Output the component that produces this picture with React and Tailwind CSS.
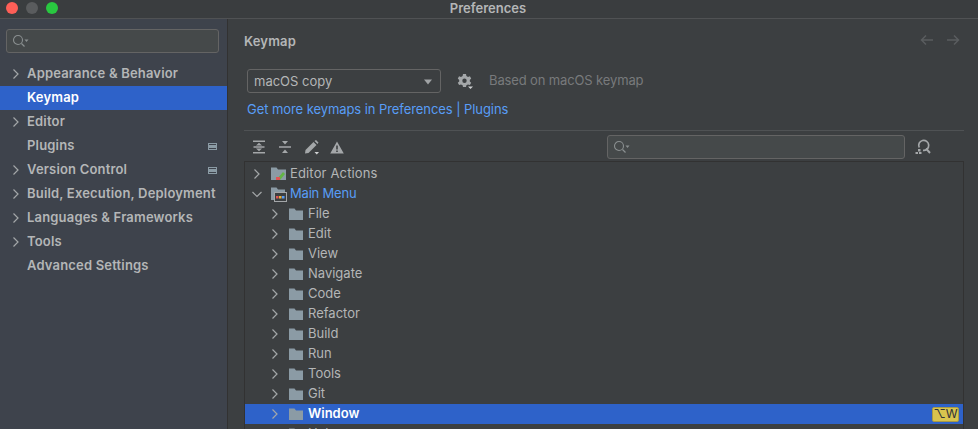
import React from 'react';

const font = { fontFamily: 'Inter, "Liberation Sans", sans-serif' };

const sideItems = [
    { label: 'Appearance & Behavior', arrow: true },
    { label: 'Keymap', selected: true },
    { label: 'Editor', arrow: true },
    { label: 'Plugins', badge: true },
    { label: 'Version Control', arrow: true, badge: true },
    { label: 'Build, Execution, Deployment', arrow: true },
    { label: 'Languages & Frameworks', arrow: true },
    { label: 'Tools', arrow: true },
    { label: 'Advanced Settings' },
];

const menuItems = ['File', 'Edit', 'View', 'Navigate', 'Code', 'Refactor', 'Build', 'Run', 'Tools', 'Git'];

const Chevron = ({ open, className = '' }) => (
    <svg width="12" height="12" viewBox="0 0 12 12" fill="none" stroke="#a4a7a9" strokeWidth="1.2" className={className}>
        {open ? <path d="M1.5 4 L6 8.5 L10.5 4" /> : <path d="M3.5 1.5 L8 6 L3.5 10.5" />}
    </svg>
);

const Folder = () => (
    <svg width="14" height="12" viewBox="0 0 14 12" className="shrink-0">
        <path d="M0 0.5 H5.5 L7 2.5 H14 V12 H0 Z" fill="#8b9ba5" />
    </svg>
);

const SearchIcon = () => (
    <svg width="18" height="14" viewBox="0 0 18 14" fill="none" className="shrink-0">
        <circle cx="6" cy="6" r="4.5" stroke="#8a8f90" strokeWidth="1.1" />
        <path d="M9.5 9.5 L12.5 12.5" stroke="#8a8f90" strokeWidth="1.3" />
        <path d="M12.5 5.5 H16.5 L14.5 8 Z" fill="#8a8f90" />
    </svg>
);

const SearchBox = ({ className }) => (
    <div className={`h-6 flex items-center pl-[5px] rounded-[3px] border border-[#646464] bg-[#45494a] ${className}`}>
        <SearchIcon />
    </div>
);

const SideRow = ({ item }) => (
    <div className={`h-6 flex items-center text-[13px] font-semibold tracking-[0.18px] ${item.selected ? 'bg-[#2e62c9] text-white' : 'text-[#b4b6b7]'}`}>
        <div className="w-[27px] shrink-0 pl-[10px]">{item.arrow && <Chevron />}</div>
        <span className="flex-1 whitespace-nowrap">{item.label}</span>
        {item.badge && (
            <svg width="9" height="7" viewBox="0 0 9 7" className="mr-[10px] shrink-0">
                <rect x="0.5" y="0.5" width="8" height="6" fill="none" stroke="#8b9ba5" />
                <rect x="1" y="2" width="7" height="3" fill="#8b9ba5" />
            </svg>
        )}
    </div>
);

const TreeRow = ({ label, selected }) => (
    <div className={`h-5 flex items-center pl-6 text-[13px] ${selected ? 'bg-[#2e62c9] text-white font-semibold' : 'text-[#b4b6b7]'}`}>
        <Chevron className="mr-[8px]" />
        <Folder />
        <span className="ml-[5px] flex-1">{label}</span>
        {selected && (
            <span className="mr-[4px] h-[15px] w-[27px] flex items-center justify-center rounded-[2px] border border-[#a89a45] bg-[#d8c44e] text-[#2f3238] text-[12px] font-normal leading-none">⌥W</span>
        )}
    </div>
);

export default function App() {
    return (
        <div className="w-[978px] h-[429px] overflow-hidden flex flex-col bg-[#3c3f41]" style={font}>
            {/* Title bar */}
            <div className="relative h-[19px] shrink-0 flex items-start justify-center bg-[#3a3d3f] border-b border-[#505254]">
                <div className="absolute left-[6px] top-[2px] flex gap-2">
                    <div className="w-3 h-3 rounded-full bg-[#fe5f57]" />
                    <div className="w-3 h-3 rounded-full bg-[#5a5c5e]" />
                    <div className="w-3 h-3 rounded-full bg-[#29c740]" />
                </div>
                <span className="text-[13px] font-semibold text-[#b4b6b7] leading-[16px] -ml-[2px]">Preferences</span>
            </div>

            <div className="flex flex-1 min-h-0">
                {/* Sidebar */}
                <div className="w-[228px] shrink-0 bg-[#3e434c] border-r border-[#323232]">
                    <SearchBox className="ml-[6px] mr-[8px] mt-[10px] mb-[9px]" />
                    {sideItems.map((item) => (
                        <SideRow key={item.label} item={item} />
                    ))}
                </div>

                {/* Main panel */}
                <div className="flex-1 min-w-0 pl-4 pr-[14px]">
                    <div className="h-[50px] flex items-start justify-between pt-[14px]">
                        <span className="text-[13px] font-semibold text-[#b4b6b7] leading-4 tracking-[0.15px]">Keymap</span>
                        <div className="flex gap-3 pr-[4px] pt-[1px]">
                            <svg width="14" height="12" viewBox="0 0 14 12" fill="none" stroke="#5a5d5f" strokeWidth="1.5"><path d="M13 6 H2 M6 1.5 L1.5 6 L6 10.5" /></svg>
                            <svg width="14" height="12" viewBox="0 0 14 12" fill="none" stroke="#5a5d5f" strokeWidth="1.5"><path d="M1 6 H12 M8 1.5 L12.5 6 L8 10.5" /></svg>
                        </div>
                    </div>

                    <div className="pl-[3px] flex items-center h-6">
                        <div className="w-[194px] h-6 px-[6px] pt-px flex items-center justify-between rounded-[3px] border border-[#646464] bg-[#3c3f41] text-[13px] text-[#b4b6b7]">
                            <span>macOS copy</span>
                            <svg width="10" height="6" viewBox="0 0 10 6" className="mr-[1px]"><path d="M1 0.5 H9 L5 5.5 Z" fill="#a0a3a5" /></svg>
                        </div>
                        <svg width="16" height="16" viewBox="0 0 16 16" className="ml-4" fill="#a4a7a9">
                            <path fillRule="evenodd" d="M6 1 H9 L9.4 3 L11 3.9 L12.9 3.2 L14.2 5.6 L12.8 7 V8.4 L14.2 9.8 L12.9 12 L11 11.4 L9.4 12.3 L9 14 H6 L5.6 12.3 L4 11.4 L2.1 12 L0.8 9.8 L2.2 8.4 V7 L0.8 5.6 L2.1 3.2 L4 3.9 L5.6 3 Z M7.5 5.5 A2.2 2.2 0 1 0 7.5 9.9 A2.2 2.2 0 1 0 7.5 5.5 Z" />
                            <path d="M11 13.5 H16 L13.5 16 Z" fill="#d0d2d3" />
                        </svg>
                        <span className="ml-4 text-[13px] text-[#787a7c] tracking-[-0.13px]">Based on macOS keymap</span>
                    </div>

                    <div className="pl-[3px] h-[25px] mt-[4px] text-[13px] text-[#589df6] leading-[25px] tracking-[-0.07px]">Get more keymaps in Preferences | Plugins</div>

                    <div className="mt-[8px] border-t border-[#4f5254] h-[31px] flex items-start pt-[4px] pl-[8px]">
                        <div className="flex items-center h-6 gap-[12px] w-[355px] shrink-0">
                            <svg width="14" height="14" viewBox="0 0 14 14" fill="#a4a7a9">
                                <path d="M1 0.5 H13 V2 H1 Z M1 12 H13 V13.5 H1 Z M1.5 6.2 H12.5 V7.8 H1.5 Z M7 2.8 L10 5.4 H4 Z M7 11.2 L4 8.6 H10 Z" />
                            </svg>
                            <svg width="14" height="14" viewBox="0 0 14 14" fill="#a4a7a9">
                                <path d="M1 6.2 H13 V7.8 H1 Z M4 1 H10 L7 4.6 Z M4 13 H10 L7 9.4 Z" />
                            </svg>
                            <svg width="16" height="15" viewBox="0 0 16 15" fill="#a4a7a9">
                                <path d="M1 13.5 L1.5 10 L9.5 2 L12.5 5 L4.5 13 Z M10.5 1 L12 0 L14.5 2.5 L13.5 4 Z" />
                                <path d="M10.5 12 H15 L12.75 14.5 Z" fill="#d0d2d3" />
                            </svg>
                            <svg width="14" height="13" viewBox="0 0 14 13" className="-ml-[2px]">
                                <path fillRule="evenodd" d="M7 0.5 L13.8 12.5 H0.2 Z M6.2 4.5 V8.5 H7.8 V4.5 Z M6.2 9.5 V11 H7.8 V9.5 Z" fill="#a4a7a9" />
                            </svg>
                        </div>
                        <SearchBox className="w-[298px] shrink-0" />
                        <svg width="16" height="16" viewBox="0 0 16 16" fill="none" className="ml-[10px] mt-[4px]">
                            <path d="M4.2 8.5 A5 5 0 1 1 8 11.3" stroke="#a4a7a9" strokeWidth="1.7" />
                            <path d="M11 9.5 L15 14" stroke="#a4a7a9" strokeWidth="1.9" />
                            <path d="M3 10 H5.5 V12.5 H3 Z M0.5 13 H3 V15 H0.5 Z M4 13 H6.5 V15 H4 Z" fill="#a4a7a9" />
                        </svg>
                    </div>

                    {/* Tree */}
                    <div className="border border-[#323232] border-b-0 pt-[2px] h-[300px] overflow-hidden">
                        <div className="h-5 flex items-center pl-[6px] text-[13px] text-[#b4b6b7]">
                            <Chevron className="mr-[8px]" />
                            <svg width="16" height="14" viewBox="0 0 16 14" className="shrink-0">
                                <path d="M0 0.5 H5.5 L7 2.5 H15 V13 H0 Z" fill="#8b9ba5" />
                                <path d="M6 12 L12 5 L14 7 L9 13 Z" fill="#62b543" />
                                <path d="M5 10 H9 V13 H5 Z" fill="#e05555" />
                            </svg>
                            <span className="ml-[3px] tracking-[0.15px]">Editor Actions</span>
                        </div>
                        <div className="h-5 flex items-center pl-[6px] text-[13px] text-[#589df6]">
                            <Chevron open className="mr-[8px]" />
                            <svg width="16" height="15" viewBox="0 0 16 15" className="shrink-0">
                                <path d="M0 0.5 H5.5 L7 2.5 H14 V13 H0 Z" fill="#8b9ba5" />
                                <rect x="3.5" y="5.5" width="12" height="9" fill="#3c3f41" stroke="#a4a7a9" />
                                <rect x="5" y="9" width="2.5" height="2.5" fill="#e05555" />
                                <rect x="8" y="9" width="2.5" height="2.5" fill="#e8b23a" />
                                <rect x="11" y="9" width="2.5" height="2.5" fill="#589df6" />
                            </svg>
                            <span className="ml-[3px] tracking-[-0.2px]">Main Menu</span>
                        </div>
                        {menuItems.map((label) => (
                            <TreeRow key={label} label={label} />
                        ))}
                        <TreeRow label="Window" selected />
                        <TreeRow label="Help" />
                    </div>
                </div>
            </div>
        </div>
    );
}
